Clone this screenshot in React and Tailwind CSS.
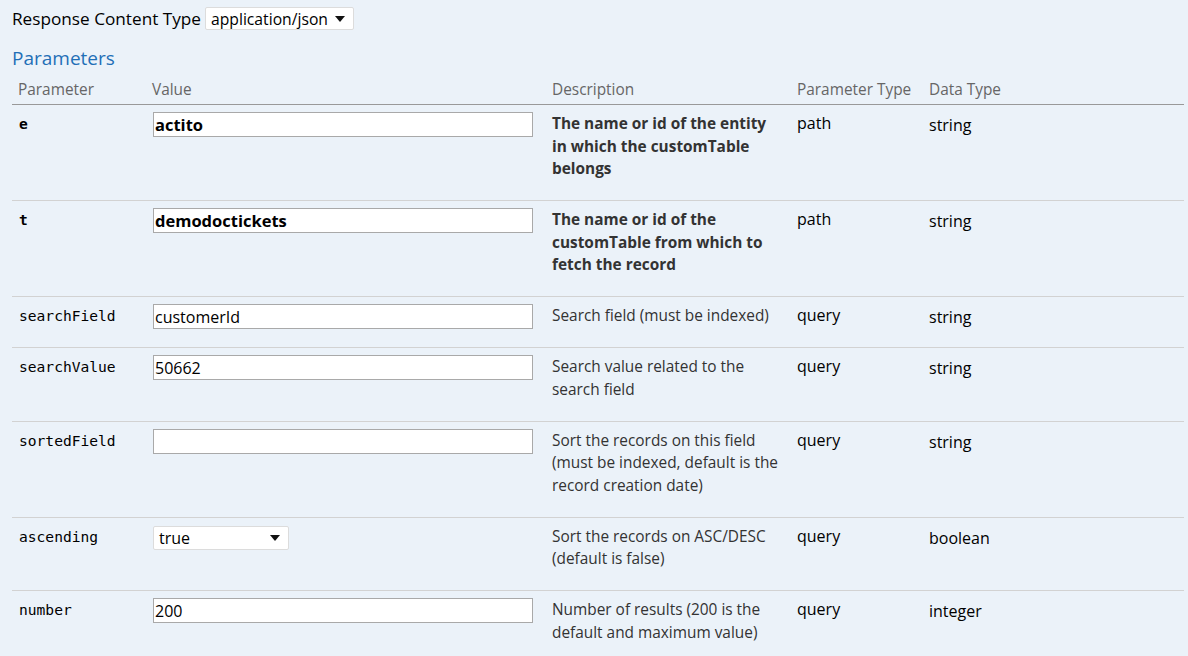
import React from "react";

const rows = [
  { name: "e", value: "actito", bold: true, desc: "The name or id of the entity in which the customTable belongs", ptype: "path", dtype: "string" },
  { name: "t", value: "demodoctickets", bold: true, desc: "The name or id of the customTable from which to fetch the record", ptype: "path", dtype: "string" },
  { name: "searchField", value: "customerId", desc: "Search field (must be indexed)", ptype: "query", dtype: "string" },
  { name: "searchValue", value: "50662", desc: "Search value related to the search field", ptype: "query", dtype: "string" },
  { name: "sortedField", value: "", desc: "Sort the records on this field (must be indexed, default is the record creation date)", ptype: "query", dtype: "string" },
  { name: "ascending", select: "true", desc: "Sort the records on ASC/DESC (default is false)", ptype: "query", dtype: "boolean" },
  { name: "number", value: "200", desc: "Number of results (200 is the default and maximum value)", ptype: "query", dtype: "integer" },
];

const Caret = () => (
  <svg width="10" height="6" viewBox="0 0 10 6" className="shrink-0">
    <path d="M0 0h10L5 6z" fill="#111" />
  </svg>
);

const FakeSelect = ({ value, className }) => (
  <div className={"flex items-center justify-between bg-white border border-[#dcdcdc] rounded-[2px] pl-[5px] pr-[8px] text-black " + className}>
    <span>{value}</span>
    <Caret />
  </div>
);

export default function App() {
  return (
    <div className="min-h-[656px] w-[1188px] bg-[#ebf2f9] font-['Open_Sans',sans-serif] text-[#333] overflow-hidden">
      <div className="flex items-center gap-[4px] pl-[12px] pt-[7px] h-[30px] text-[17.2px] leading-[22px] text-black">
        <span>Response Content Type</span>
        <FakeSelect value="application/json" className="w-[149px] h-[23px] text-[15.7px]" />
      </div>

      <h4 className="pl-[12px] mt-[15px] text-[19px] leading-[26px] text-[#1f6fb7]">Parameters</h4>

      <table className="ml-[12px] w-[1172px] border-collapse table-fixed text-[15.4px]">
        <colgroup>
          <col className="w-[135px]" />
          <col className="w-[400px]" />
          <col className="w-[245px]" />
          <col className="w-[132px]" />
          <col />
        </colgroup>
        <thead>
          <tr className="border-b border-[#999] text-[#666] text-left">
            <th className="font-normal pl-[6px] pt-[8px] pb-[3px] leading-[22px]">Parameter</th>
            <th className="font-normal pl-[5px] pt-[8px] pb-[3px] leading-[22px]">Value</th>
            <th className="font-normal pl-[5px] pt-[8px] pb-[3px] leading-[22px]">Description</th>
            <th className="font-normal pl-[5px] pt-[8px] pb-[3px] leading-[22px]">Parameter Type</th>
            <th className="font-normal pl-[5px] pt-[8px] pb-[3px] leading-[22px]">Data Type</th>
          </tr>
        </thead>
        <tbody>
          {rows.map((r) => (
            <tr key={r.name} className="border-b border-[#d2d2d2] align-top">
              <td className={"pl-[7px] pt-[9px] font-['DejaVu_Sans_Mono',monospace] text-[14.6px] leading-[20px] text-black " + (r.bold ? "font-bold" : "")}>
                {r.name}
              </td>
              <td className="pl-[6px] pt-[7px]">
                {r.select ? (
                  <FakeSelect value={r.select} className="w-[136px] h-[24px] mt-[1px] text-[16px]" />
                ) : (
                  <div className={"w-[380px] h-[25px] bg-white border border-[#a9a9a9] pl-[1px] leading-[24px] text-black " + (r.bold ? "font-bold text-[16.5px]" : "text-[16px]")}>
                    {r.value}
                  </div>
                )}
              </td>
              <td className={"pl-[5px] pt-[8px] pb-[19.5px] pr-[10px] leading-[22.5px] " + (r.bold ? "font-bold" : "")}>
                {r.desc}
              </td>
              <td className="pl-[5px] pt-[7px] text-[16px] leading-[22px] text-black">{r.ptype}</td>
              <td className="pl-[5px] pt-[9px] text-[16px] leading-[22px] text-black">{r.dtype}</td>
            </tr>
          ))}
        </tbody>
      </table>
    </div>
  );
}
